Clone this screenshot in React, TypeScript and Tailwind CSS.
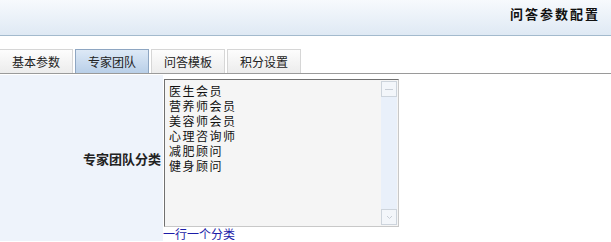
import React from 'react'

const font = { fontFamily: '"Noto Sans CJK SC", "Liberation Sans", sans-serif' }

const tabs = ['基本参数', '专家团队', '问答模板', '积分设置']
const items = ['医生会员', '营养师会员', '美容师会员', '心理咨询师', '减肥顾问', '健身顾问']

export default function App() {
  return (
    <div className="w-[611px] h-[242px] bg-white overflow-hidden" style={font}>
      {/* Header */}
      <div className="h-[36px] flex items-center justify-end pr-[11px] pb-[8px] border-b border-[#a3bacd] bg-gradient-to-b from-[#f7fafd] to-[#dfe9f4]">
        <span className="text-[13px] font-bold tracking-[2px] text-[#111] leading-none">问答参数配置</span>
      </div>

      {/* Tabs */}
      <div className="flex gap-[2px] pt-[13px] border-b border-[#9a9a9a]">
        {tabs.map((t, i) => (
          <div
            key={t}
            className={
              i === 1
                ? 'w-[74px] h-[24px] flex items-center justify-center text-[12px] text-[#222] border border-b-0 border-[#8ea6c2] bg-gradient-to-b from-[#dde9f6] to-[#b9cfe8]'
                : 'w-[74px] h-[24px] flex items-center justify-center text-[12px] text-[#222] border border-b-0 border-[#d6d6d6] bg-gradient-to-b from-[#fdfdfd] to-[#ececec] first:border-l-0 first:w-[73px]'
            }
          >
            {t}
          </div>
        ))}
      </div>

      {/* Content row */}
      <div className="flex mt-[1px]">
        <div className="w-[163px] bg-[#eef3fb] flex items-center justify-end pr-[2px] pt-[2px]">
          <span className="text-[13px] font-bold text-[#222]">专家团队分类</span>
        </div>
        <div className="pt-[4px] pl-[1px] bg-white flex-1">
          <div className="w-[235px] h-[148px] flex border border-t-[#707070] border-l-[#707070] border-r-[#c8c8c8] border-b-[#c8c8c8] bg-[#f5f5f5]">
            <div className="flex-1 pl-[4px] pt-[3px] text-[12px] leading-[15px] tracking-[1.5px] text-[#111]">
              {items.map((s) => (
                <div key={s} className="h-[15px]">{s}</div>
              ))}
            </div>
            <div className="w-[16px] my-[1px] mr-[1px] flex flex-col justify-between bg-[#e9f0fa]">
              <div className="h-[16px] border border-[#cdd4dc] bg-[#f3f6fa] flex items-center justify-center">
                <div className="w-[8px] h-[1px] bg-[#c8ced6]" />
              </div>
              <div className="h-[16px] border border-[#cdd4dc] bg-[#f3f6fa] flex items-center justify-center">
                <svg width="7" height="5" viewBox="0 0 7 5">
                  <path d="M1 1 L3.5 3.5 L6 1" fill="none" stroke="#c8ced6" strokeWidth="1" />
                </svg>
              </div>
            </div>
          </div>
          <div className="text-[12px] leading-[14px] text-[#1c1ca8] -ml-[1px]">一行一个分类</div>
        </div>
      </div>
    </div>
  )
}
